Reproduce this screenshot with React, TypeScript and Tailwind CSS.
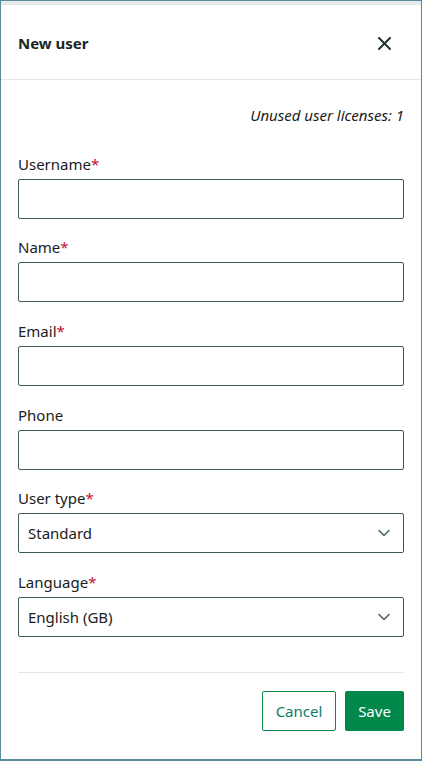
import { ReactNode } from 'react'

const font = { fontFamily: '"Noto Sans", "Open Sans", Arial, sans-serif' }

function Label({ children, required }: { children: ReactNode, required?: boolean }) {
  return (
    <div className="h-[20px] leading-[20px] text-[15px] text-[#1b1b1b] mb-[5px]">
      {children}
      {required && <span className="text-[#c4122f]">*</span>}
    </div>
  )
}

function Chevron() {
  return (
    <svg width="14" height="14" viewBox="0 0 14 14" fill="none" className="text-[#4b6662]">
      <path d="M2 4.5 L7 9.5 L12 4.5" stroke="currentColor" strokeWidth="1.5" strokeLinecap="round" strokeLinejoin="round" />
    </svg>
  )
}

function Field({ label, required, select, tight }: { label: string, required?: boolean, select?: string, tight?: boolean }) {
  return (
    <div className={tight ? 'mb-[18px]' : 'mb-[19px]'}>
      <Label required={required}>{label}</Label>
      {select ? (
        <div className="h-[40px] border border-[#3f5a56] rounded-[2px] flex items-center justify-between pl-[9px] pr-[12px] text-[15px] text-[#1b1b1b]">
          <span>{select}</span>
          <Chevron />
        </div>
      ) : (
        <input className="block w-full h-[40px] border border-[#3f5a56] rounded-[2px] px-[9px] text-[15px] outline-none" />
      )}
    </div>
  )
}

export default function App() {
  return (
    <div style={font} className="w-[422px] h-[761px] bg-white border border-[#5b8aa0] border-b-2 flex flex-col overflow-hidden">
      <div className="h-[4px] bg-[#e6e8ea]" />
      <div className="h-[75px] px-[17px] flex items-center justify-between border-b border-[#e4e7e7]">
        <h2 className="text-[15px] font-bold text-[#1b2624] mt-[2px]">New user</h2>
        <button className="w-[20px] h-[20px] flex items-center justify-center mr-[10px] mt-[2px]">
          <svg width="13" height="13" viewBox="0 0 13 13" fill="none">
            <path d="M1 1 L12 12 M12 1 L1 12" stroke="#1f3532" strokeWidth="2" strokeLinecap="round" />
          </svg>
        </button>
      </div>
      <div className="px-[17px] flex-1 flex flex-col">
        <p className="mt-[25px] text-right italic text-[15px] leading-[20px] text-[#1b1b1b]">Unused user licenses: 1</p>
        <div className="mt-[29px]">
          <Field label="Username" required tight />
          <Field label="Name" required />
          <Field label="Email" required />
          <Field label="Phone" tight />
          <Field label="User type" required select="Standard" />
          <Field label="Language" required select="English (GB)" />
        </div>
        <div className="mt-[16px] border-t border-[#e4e7e7]" />
        <div className="mt-[18px] flex justify-end gap-[9px]">
          <button className="h-[40px] w-[74px] border border-[#0b8a4c] rounded-[2px] text-[15px] text-[#0a7d6a] bg-white">Cancel</button>
          <button className="h-[40px] w-[59px] rounded-[2px] text-[15px] text-white bg-[#00874a]">Save</button>
        </div>
      </div>
    </div>
  )
}
